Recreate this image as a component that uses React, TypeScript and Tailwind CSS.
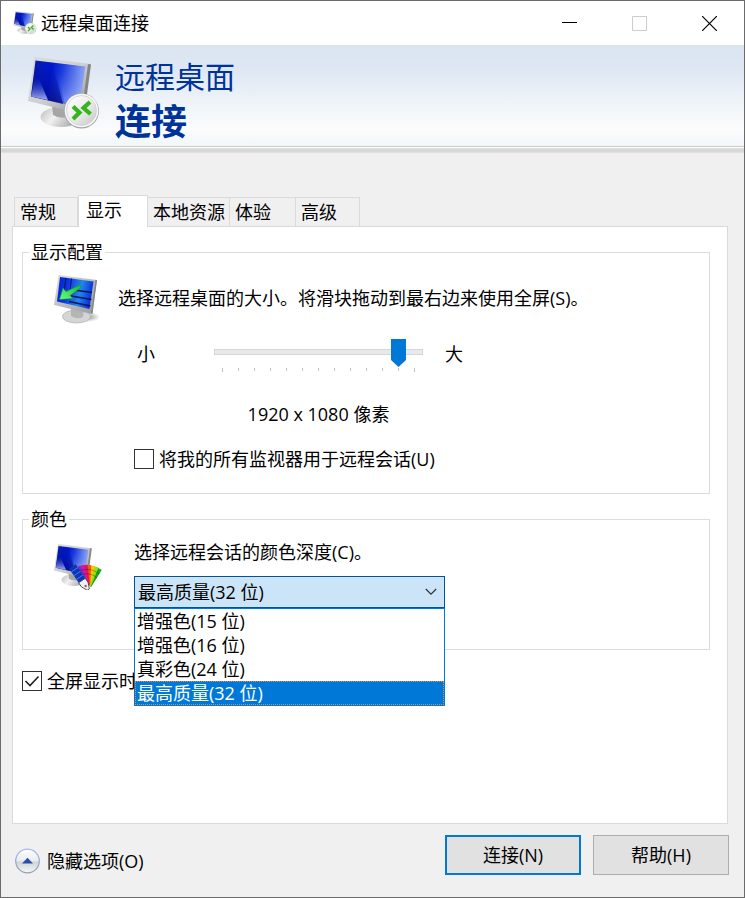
import React, { useState } from 'react';

const tabs = [
  { name: '常规', width: 'w-16' },
  { name: '显示', width: 'w-[70px]' },
  { name: '本地资源', width: 'w-[82px]' },
  { name: '体验', width: 'w-[66px]' },
  { name: '高级', width: 'w-16' },
];

const colorDepths = ['增强色(15 位)', '增强色(16 位)', '真彩色(24 位)', '最高质量(32 位)'];

function MonitorDefs({ id }: { id: string }) {
  return (
    <defs>
      <linearGradient id={`${id}-frame`} x1="0" y1="0" x2="1" y2="1">
        <stop offset="0" stopColor="#dcdcdc" />
        <stop offset="0.5" stopColor="#cfcfcf" />
        <stop offset="1" stopColor="#8e8e8e" />
      </linearGradient>
      <linearGradient id={`${id}-screen`} x1="0" y1="0" x2="1" y2="0.2">
        <stop offset="0" stopColor="#0a1ba8" />
        <stop offset="0.4" stopColor="#0019d0" />
        <stop offset="0.58" stopColor="#1a3ade" />
        <stop offset="1" stopColor="#8ca6f6" />
      </linearGradient>
      <linearGradient id={`${id}-shine`} x1="0" y1="0" x2="0" y2="1">
        <stop offset="0.2" stopColor="#3a55d8" stopOpacity="0" />
        <stop offset="1" stopColor="#b4c2f4" stopOpacity="0.9" />
      </linearGradient>
      <linearGradient id={`${id}-dark`} x1="0" y1="0" x2="0" y2="1">
        <stop offset="0" stopColor="#000c9c" stopOpacity="0" />
        <stop offset="1" stopColor="#00047a" stopOpacity="0.75" />
      </linearGradient>
      <linearGradient id={`${id}-foot`} x1="0" y1="0" x2="1" y2="0.4">
        <stop offset="0" stopColor="#b9b9b9" />
        <stop offset="0.45" stopColor="#f1f1f1" />
        <stop offset="1" stopColor="#a9a9a9" />
      </linearGradient>
    </defs>
  );
}

function Monitor({ id }: { id: string }) {
  return (
    <>
      <MonitorDefs id={id} />
      <ellipse cx="33" cy="60" rx="20.5" ry="10" fill={`url(#${id}-foot)`} />
      <path d="M24 48L45 52L43 59Q33 63 25 58Z" fill="#a6a6a6" />
      <path d="M6.5 0L63 7L61 13L54 57L0 44Z" fill={`url(#${id}-frame)`} />
      <path d="M60 7L63 7.500L56.500 56L53.500 57Z" fill="#858585" />
      <path d="M7.500 3.500L57.500 9.500L51 50L3 39.500Z" fill={`url(#${id}-screen)`} />
      <path d="M7.500 3.500L24 5.500L35 47L3 39.500Z" fill={`url(#${id}-dark)`} />
      <path d="M8 15L20 43L3 39.500Z" fill={`url(#${id}-shine)`} />
      <path d="M27 6L57.500 9.500L52 44L37 47.500Z" fill={`url(#${id}-shine)`} opacity="0.45" />
    </>
  );
}

function RemoteIcon({ id, className }: { id: string; className: string }) {
  return (
    <svg viewBox="0 0 72 74" className={className} aria-hidden="true">
      <Monitor id={id} />
      <defs>
        <linearGradient id={`${id}-badge`} x1="0" y1="0" x2="1" y2="1">
          <stop offset="0" stopColor="#ffffff" />
          <stop offset="0.5" stopColor="#ededed" />
          <stop offset="1" stopColor="#c4c4c4" />
        </linearGradient>
      </defs>
      <circle cx="53.500" cy="54" r="17.500" fill="#a5a5a5" />
      <circle cx="53.500" cy="53.500" r="16.800" fill="#f8f8f8" />
      <circle cx="53.500" cy="53.500" r="15" fill={`url(#${id}-badge)`} stroke="#cecece" strokeWidth="0.8" />
      <path d="M45 49.500L51.500 55.500L45 62" fill="none" stroke="#35b41d" strokeWidth="4.200" />
      <path d="M62 45L55.500 51L62.500 57" fill="none" stroke="#35b41d" strokeWidth="4.200" />
    </svg>
  );
}

function DisplayIcon() {
  return (
    <svg viewBox="0 0 48 50" className="h-[50px] w-12 shrink-0" aria-hidden="true">
      <defs>
        <linearGradient id="disp-screen" x1="0" y1="0" x2="1" y2="0.2">
          <stop offset="0" stopColor="#0826c8" />
          <stop offset="0.3" stopColor="#0a30e0" />
          <stop offset="0.7" stopColor="#2387ec" />
          <stop offset="1" stopColor="#0a35d8" />
        </linearGradient>
        <linearGradient id="disp-frame" x1="0" y1="0" x2="1" y2="1">
          <stop offset="0" stopColor="#e0e0e0" />
          <stop offset="1" stopColor="#9a9a9a" />
        </linearGradient>
        <linearGradient id="disp-arrow" x1="1" y1="0" x2="0" y2="1">
          <stop offset="0" stopColor="#12b83a" />
          <stop offset="1" stopColor="#6cff7c" />
        </linearGradient>
        <radialGradient id="disp-shadow">
          <stop offset="0" stopColor="#808080" stopOpacity="0.8" />
          <stop offset="1" stopColor="#808080" stopOpacity="0" />
        </radialGradient>
      </defs>
      <ellipse cx="34" cy="43" rx="12" ry="5" fill="url(#disp-shadow)" />
      <ellipse cx="22.500" cy="42.500" rx="14" ry="6.500" fill="#d5d5d5" stroke="#adadad" strokeWidth="0.7" />
      <path d="M17 33L30 36L29 43Q23 46 17 42Z" fill="#b5b5b5" />
      <path d="M4.500 1L43 6L38 40L0 31Z" fill="url(#disp-frame)" />
      <path d="M41.500 6L43 6L38.500 40L37 39Z" fill="#858585" />
      <path d="M6 3L39.500 7.500L35.500 35L3 27.500Z" fill="url(#disp-screen)" />
      <path d="M12 4L10 17M17.500 4.500L16 16" stroke="#04145e" strokeWidth="1" fill="none" />
      <path d="M20 16L38 18.500M17 22L37.500 25.500M15 27.500L36.500 32" stroke="#04145e" strokeWidth="1.600" fill="none" />
      <path d="M26 11L27 13.500L16 21.500L19 24.500L5.500 25.500L9 14L12 17.500Z" fill="url(#disp-arrow)" stroke="#0a9a30" strokeWidth="0.6" />
    </svg>
  );
}

function ColorIcon() {
  const swatches = [
    { color: '#7b2bd0', angle: -24 },
    { color: '#d018a8', angle: -15 },
    { color: '#e81450', angle: -6 },
    { color: '#f05a10', angle: 3 },
    { color: '#f5c800', angle: 12 },
    { color: '#9edc14', angle: 22 },
    { color: '#12a820', angle: 32 },
  ];
  return (
    <svg viewBox="0 0 48 48" className="mt-0.5 size-12 shrink-0" aria-hidden="true">
      <g transform="translate(0 2) scale(0.6)">
        <Monitor id="color" />
      </g>
      {[...swatches].reverse().map((s) => (
        <g key={s.color} transform={`rotate(${s.angle} 33 46)`}>
          <rect x="30" y="23" width="6" height="20" fill={s.color} />
          <path d="M30 27.500H36M30 32H36" stroke="#00000055" strokeWidth="0.8" />
        </g>
      ))}
      <g transform="rotate(-34 33 46)">
        <rect x="29" y="20" width="8" height="18" fill="#0d35b5" />
        <path d="M29 24H37M29 28.500H37M29 33H37" stroke="#4d78e8" strokeWidth="0.9" />
        <path d="M29 37H37V42L34.500 48H32L29 42Z" fill="#f0f0f0" stroke="#444" strokeWidth="0.8" />
        <circle cx="33" cy="43.500" r="1.200" fill="#666" />
      </g>
    </svg>
  );
}

function CollapseIcon() {
  return (
    <svg viewBox="0 0 26 26" className="size-[26px]" aria-hidden="true">
      <defs>
        <linearGradient id="collapse-bg" x1="0" y1="0" x2="0" y2="1">
          <stop offset="0" stopColor="#ffffff" />
          <stop offset="0.48" stopColor="#e9edeb" />
          <stop offset="0.55" stopColor="#cfd6d2" />
          <stop offset="1" stopColor="#f4f8f6" />
        </linearGradient>
        <linearGradient id="collapse-ring" x1="0" y1="0" x2="0" y2="1">
          <stop offset="0" stopColor="#a9b8f2" />
          <stop offset="1" stopColor="#8f9db8" />
        </linearGradient>
      </defs>
      <circle cx="13.500" cy="13" r="11.800" fill="url(#collapse-bg)" stroke="url(#collapse-ring)" strokeWidth="1.300" />
      <path d="M8 15.500L13.500 9.800L19 15.500Z" fill="#2d4cb0" />
    </svg>
  );
}

function Checkbox({ id, label, defaultChecked = false }: { id: string; label: string; defaultChecked?: boolean }) {
  return (
    <div className="flex items-center gap-[5px]">
      <span className="relative flex size-5">
        <input
          id={id}
          type="checkbox"
          defaultChecked={defaultChecked}
          className="peer size-5 appearance-none border border-[#333333] bg-white"
        />
        <svg viewBox="0 0 20 20" className="pointer-events-none absolute inset-0 hidden size-5 peer-checked:block" aria-hidden="true">
          <path d="M3.500 10L8 14.500L16.500 5.500" fill="none" stroke="#222222" strokeWidth="1.600" />
        </svg>
      </span>
      <label htmlFor={id}>{label}</label>
    </div>
  );
}

function TitleBar() {
  return (
    <div className="flex h-11 items-center bg-white pl-3">
      <RemoteIcon id="small" className="size-6" />
      <span className="ml-1 flex-1">远程桌面连接</span>
      <button aria-label="最小化" className="flex h-full w-[70px] items-center justify-center">
        <svg viewBox="0 0 15 15" className="size-[15px]"><path d="M0 6.500H15" stroke="#000" /></svg>
      </button>
      <button aria-label="最大化" disabled className="flex h-full w-[70px] items-center justify-center">
        <svg viewBox="0 0 15 15" className="size-[15px]"><path d="M0.500 0.500H14.500V14.500H0.500Z" fill="none" stroke="#cccccc" /></svg>
      </button>
      <button aria-label="关闭" className="flex h-full w-[70px] items-center justify-center">
        <svg viewBox="0 0 15 15" className="size-[15px]"><path d="M0 0L15 15M15 0L0 15" stroke="#000" strokeWidth="1.200" /></svg>
      </button>
    </div>
  );
}

function ColorSelect() {
  const [depth, setDepth] = useState(colorDepths[3]);

  return (
    <div className="relative w-[311px]">
      <select
        id="color-depth"
        value={depth}
        onChange={(e) => setDepth(e.target.value)}
        className="block h-8 w-full appearance-none border border-[#005499] bg-[#cce4f7] px-[3px]"
      >
        {colorDepths.map((d) => (
          <option key={d}>{d}</option>
        ))}
      </select>
      <svg viewBox="0 0 12 8" className="pointer-events-none absolute top-3 right-2 h-2 w-3" aria-hidden="true">
        <path d="M0.800 1L6 6.200L11.200 1" fill="none" stroke="#333" strokeWidth="1.200" />
      </svg>
      <ul role="listbox" aria-label="颜色深度" className="absolute top-full right-0 left-0 z-10 border border-[#0078d7] bg-white">
        {colorDepths.map((d) => (
          <li
            key={d}
            role="option"
            aria-selected={d === depth}
            onClick={() => setDepth(d)}
            className={
              d === depth
                ? 'h-6 bg-[#0078d7] px-0.5 leading-6 text-white outline-1 -outline-offset-1 outline-dotted outline-[#e88c3c]'
                : 'h-6 px-0.5 leading-6'
            }
          >
            {d}
          </li>
        ))}
      </ul>
    </div>
  );
}

export default function App() {
  const [active, setActive] = useState('显示');
  const [size, setSize] = useState(11);

  return (
    <div className="flex min-h-screen flex-col border border-[#6b6b6b] bg-[#f0f0f0] font-['Open_Sans','Noto_Sans_CJK_SC',sans-serif] text-lg leading-6 text-black">
      <TitleBar />

      <header className="flex h-[101px] bg-[linear-gradient(to_bottom,#dae5f2_0%,#dee7f3_25%,#f0f5f9_60%,#fbfcfc_85%,#f1f6f9_100%)] pl-[27px]">
        <RemoteIcon id="large" className="mt-3 h-[74px] w-[72px]" />
        <h1 className="mt-[11px] ml-[15px] text-[#003399]">
          <span className="block text-[30px] leading-[42px]">远程桌面</span>
          <span className="block text-4xl leading-[48px] font-bold">连接</span>
        </h1>
      </header>
      <div className="h-[7px] bg-[linear-gradient(to_bottom,#cbcbcb_1px,#ffffff_1px,#ffffff_2px,#dedede_2px,#d4d4d4_5px,#e4e4e4_7px)]" />

      <main className="flex flex-1 flex-col pt-[42px] pr-4 pl-[11px]">
        <div role="tablist" className="z-10 -mb-px flex items-end pl-0.5">
          {tabs.map((t) => (
            <button
              key={t.name}
              role="tab"
              aria-selected={t.name === active}
              onClick={() => setActive(t.name)}
              className={`${t.width} ${
                t.name === active
                  ? 'h-8 border-x border-t border-[#dadada] bg-white pb-1 pl-[7px]'
                  : 'h-[30px] border-t border-r border-b border-[#dadada] pl-[5px] first:border-l'
              } shrink-0 text-left whitespace-nowrap`}
            >
              {t.name}
            </button>
          ))}
        </div>

        <section className="flex-1 border border-[#dadada] bg-white pt-[13px] pr-[17px] pl-[9px]">
          <fieldset className="min-h-[254px] border border-[#dcdcdc]">
            <legend className="ml-1.5 px-0.5">显示配置</legend>
            <div className="flex gap-4 pt-2.5 pl-[31px]">
              <DisplayIcon />
              <div className="pt-3">
                <p>选择远程桌面的大小。将滑块拖动到最右边来使用全屏(S)。</p>
                <div className="mt-7 flex items-start pl-[19px]">
                  <span className="mt-1 w-[77px]">小</span>
                  <div className="flex w-[209px] flex-col">
                    <input
                      type="range"
                      aria-label="远程桌面的大小"
                      min={0}
                      max={12}
                      value={size}
                      onChange={(e) => setSize(Number(e.target.value))}
                      className="h-7 w-full appearance-none bg-transparent [&::-webkit-slider-runnable-track]:h-1.5 [&::-webkit-slider-runnable-track]:border [&::-webkit-slider-runnable-track]:border-[#d6d6d6] [&::-webkit-slider-runnable-track]:bg-[#e7eaea] [&::-webkit-slider-thumb]:-mt-[11px] [&::-webkit-slider-thumb]:h-7 [&::-webkit-slider-thumb]:w-[15px] [&::-webkit-slider-thumb]:appearance-none [&::-webkit-slider-thumb]:bg-[#0078d7] [&::-webkit-slider-thumb]:[clip-path:polygon(0_0,100%_0,100%_75%,50%_100%,0_75%)]"
                    />
                    <div className="mt-0.5 flex h-1 justify-between px-2">
                      {Array.from({ length: 13 }, (_, i) => (
                        <span key={i} className="h-[3px] w-px bg-[#c4c4c4] first:h-1 last:h-1" />
                      ))}
                    </div>
                    <p className="mt-[30px] text-center">1920 x 1080 像素</p>
                  </div>
                  <span className="mt-1 ml-[22px]">大</span>
                </div>
                <div className="mt-[21px] pl-4">
                  <Checkbox id="all-monitors" label="将我的所有监视器用于远程会话(U)" />
                </div>
              </div>
            </div>
          </fieldset>

          <fieldset className="mt-[13px] min-h-[143px] border border-[#dcdcdc]">
            <legend className="ml-1.5 px-0.5">颜色</legend>
            <div className="flex gap-8 pt-[9px] pl-[31px]">
              <ColorIcon />
              <div>
                <label htmlFor="color-depth" className="mb-3 block">选择远程会话的颜色深度(C)。</label>
                <ColorSelect />
              </div>
            </div>
          </fieldset>

          <div className="mt-[19px]">
            <Checkbox id="full-screen" label="全屏显示时" defaultChecked />
          </div>
        </section>
      </main>

      <footer className="flex items-start justify-between pt-[11px] pr-[15px] pb-[22px] pl-[13px]">
        <button className="mt-[13px] flex items-center gap-[7px]">
          <CollapseIcon />
          隐藏选项(O)
        </button>
        <div className="flex gap-3">
          <button className="h-10 w-[136px] border-2 border-[#0078d7] bg-[#e1e1e1]">连接(N)</button>
          <button className="h-10 w-[136px] border border-[#adadad] bg-[#e1e1e1]">帮助(H)</button>
        </div>
      </footer>
    </div>
  );
}
